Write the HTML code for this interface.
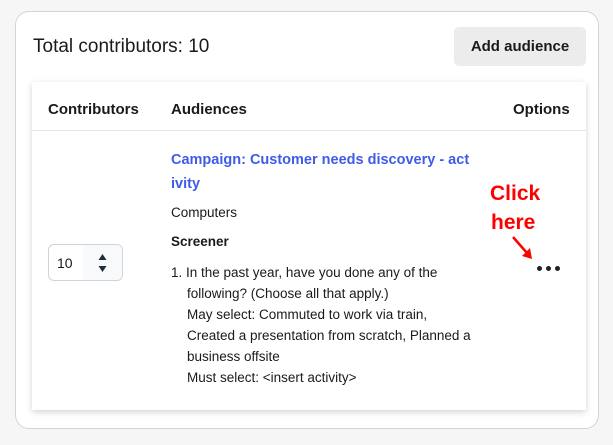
<!DOCTYPE html>
<html><head><style>
*{margin:0;padding:0;box-sizing:border-box}
body{width:613px;height:445px;background:#f6f6f6;font-family:"Liberation Sans",sans-serif;color:#1a1a1a;position:relative;overflow:hidden}
.outer{position:absolute;left:15px;top:11px;width:584px;height:418px;background:#fff;border:1px solid #d4d4d4;border-radius:14px}
.title{position:absolute;left:33px;top:36px;font-size:19px;color:#1a1a1a}
.btn{position:absolute;left:454px;top:27px;width:132px;height:39px;background:#ececec;border-radius:5px;font-size:15px;font-weight:bold;text-align:center;line-height:39px}
.inner{position:absolute;left:32px;top:82px;width:554px;height:328px;background:#fff;box-shadow:0 2px 6px rgba(0,0,0,.18)}
.th{position:absolute;top:19px;font-size:15px;font-weight:bold}
.line{position:absolute;left:0;right:0;top:48px;height:1px;background:#e6e6e6}
.a{position:absolute;left:139px;font-size:13.5px}
.link{color:#3f5be8;font-weight:bold;font-size:14.5px}
.inp{position:absolute;left:16px;top:162px;width:75px;height:37px;border:1px solid #cfd4da;border-radius:6px;overflow:hidden}
.inp span{position:absolute;left:8px;top:10px;font-size:14px}
.spin{position:absolute;left:34px;top:0;width:41px;height:37px;background:#f8f9fa}
.red{position:absolute;color:#f00;font-weight:bold;font-size:21px;font-family:"Liberation Sans",sans-serif}
</style></head><body>
<div class="outer"></div>
<div class="title">Total contributors: 10</div>
<div class="btn">Add audience</div>
<div class="inner">
<div class="th" style="left:16px">Contributors</div>
<div class="th" style="left:139px">Audiences</div>
<div class="th" style="left:481px">Options</div>
<div class="line"></div>
<div class="a link" style="top:66px;line-height:24px;width:320px">Campaign: Customer needs discovery - act<br>ivity</div>
<div class="a" style="top:123px">Computers</div>
<div class="a" style="top:152px;font-weight:bold">Screener</div>
<div class="a" style="top:180px;line-height:21px">1.&nbsp;In the past year, have you done any of the</div>
<div class="a" style="left:155px;top:201px;line-height:21px">following? (Choose all that apply.)<br>May select: Commuted to work via train,<br>Created a presentation from scratch, Planned a<br>business offsite<br>Must select: &lt;insert activity&gt;</div>
<div class="inp"><span>10</span><div class="spin">
<svg width="41" height="37"><path d="M15.5 15 L19.5 9 L23.5 15Z M15.5 21 L23.5 21 L19.5 27Z" fill="#1f2d3d"/></svg></div></div>
<div style="position:absolute;left:505px;top:184px;font-size:0">
<span style="display:inline-block;width:5px;height:5px;border-radius:50%;background:#222;margin-right:4px"></span><span style="display:inline-block;width:5px;height:5px;border-radius:50%;background:#222;margin-right:4px"></span><span style="display:inline-block;width:5px;height:5px;border-radius:50%;background:#222"></span></div>
</div>
<div class="red" style="left:490px;top:182px">Click</div>
<div class="red" style="left:491px;top:211px">here</div>
<svg style="position:absolute;left:508px;top:234px" width="30" height="30"><path d="M5 3 L19 19" stroke="#f00" stroke-width="2.5"/><path d="M14 22 L24 25 L22 14Z" fill="#f00"/></svg>
</body></html>
